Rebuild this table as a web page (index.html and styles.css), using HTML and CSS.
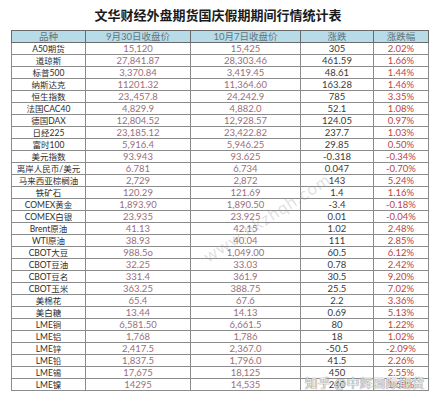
FILE: index.html
```html
<!DOCTYPE html>
<html lang="zh">
<head>
<meta charset="utf-8">
<link rel="stylesheet" href="styles.css">
</head>
<body>
<div class="page">
  <h1 class="title">文华财经外盘期货国庆假期期间行情统计表</h1>
  <div class="wrap">
    <table class="tbl">
      <colgroup>
        <col class="c1"><col class="c2"><col class="c3"><col class="c4"><col class="c5">
      </colgroup>
      <thead>
        <tr><th>品种</th><th>9月30日收盘价</th><th>10月7日收盘价</th><th>涨跌</th><th>涨跌幅</th></tr>
      </thead>
      <tbody>
        <tr><td class="n">A50期货</td><td class="p">15,120</td><td class="p">15,425</td><td>305</td><td class="r">2.02%</td></tr>
        <tr><td class="n">道琼斯</td><td class="p">27,841.87</td><td class="p">28,303.46</td><td>461.59</td><td class="r">1.66%</td></tr>
        <tr><td class="n">标普500</td><td class="p">3,370.84</td><td class="p">3,419.45</td><td>48.61</td><td class="r">1.44%</td></tr>
        <tr><td class="n">纳斯达克</td><td class="p">11201.32</td><td class="p">11,364.60</td><td>163.28</td><td class="r">1.46%</td></tr>
        <tr><td class="n">恒生指数</td><td class="p">23,,457.8</td><td class="p">24,242.9</td><td>785</td><td class="r">3.35%</td></tr>
        <tr><td class="n">法国CAC40</td><td class="p">4,829.9</td><td class="p">4,882.0</td><td>52.1</td><td class="r">1.08%</td></tr>
        <tr><td class="n">德国DAX</td><td class="p">12,804.52</td><td class="p">12,928.57</td><td>124.05</td><td class="r">0.97%</td></tr>
        <tr><td class="n">日经225</td><td class="p">23,185.12</td><td class="p">23,422.82</td><td>237.7</td><td class="r">1.03%</td></tr>
        <tr><td class="n">富时100</td><td class="p">5,916.4</td><td class="p">5,946.25</td><td>29.85</td><td class="r">0.50%</td></tr>
        <tr><td class="n">美元指数</td><td class="p">93.943</td><td class="p">93.625</td><td>-0.318</td><td class="r">-0.34%</td></tr>
        <tr><td class="n">离岸人民币/美元</td><td class="p">6.781</td><td class="p">6.734</td><td>0.047</td><td class="r">-0.70%</td></tr>
        <tr><td class="n">马来西亚棕榈油</td><td class="p">2,729</td><td class="p">2,872</td><td>143</td><td class="r">5.24%</td></tr>
        <tr><td class="n">铁矿石</td><td class="p">120.29</td><td class="p">121.69</td><td>1.4</td><td class="r">1.16%</td></tr>
        <tr><td class="n">COMEX黄金</td><td class="p">1,893.90</td><td class="p">1,890.50</td><td>-3.4</td><td class="r">-0.18%</td></tr>
        <tr><td class="n">COMEX白银</td><td class="p">23.935</td><td class="p">23.925</td><td>0.01</td><td class="r">-0.04%</td></tr>
        <tr><td class="n">Brent原油</td><td class="p">41.13</td><td class="p">42.15</td><td>1.02</td><td class="r">2.48%</td></tr>
        <tr><td class="n">WTI原油</td><td class="p">38.93</td><td class="p">40.04</td><td>111</td><td class="r">2.85%</td></tr>
        <tr><td class="n">CBOT大豆</td><td class="p">988.5o</td><td class="p">1,049.00</td><td>60.5</td><td class="r">6.12%</td></tr>
        <tr><td class="n">CBOT豆油</td><td class="p">32.25</td><td class="p">33.03</td><td>0.78</td><td class="r">2.42%</td></tr>
        <tr><td class="n">CBOT豆名</td><td class="p">331.4</td><td class="p">361.9</td><td>30.5</td><td class="r">9.20%</td></tr>
        <tr><td class="n">CBOT玉米</td><td class="p">363.25</td><td class="p">388.75</td><td>25.5</td><td class="r">7.02%</td></tr>
        <tr><td class="n">美棉花</td><td class="p">65.4</td><td class="p">67.6</td><td>2.2</td><td class="r">3.36%</td></tr>
        <tr><td class="n">美白糖</td><td class="p">13.44</td><td class="p">14.13</td><td>0.69</td><td class="r">5.13%</td></tr>
        <tr><td class="n">LME铜</td><td class="p">6,581.50</td><td class="p">6,661.5</td><td>80</td><td class="r">1.22%</td></tr>
        <tr><td class="n">LME铝</td><td class="p">1,768</td><td class="p">1,786</td><td>18</td><td class="r">1.02%</td></tr>
        <tr><td class="n">LME锌</td><td class="p">2,417.5</td><td class="p">2,367.0</td><td>-50.5</td><td class="r">-2.09%</td></tr>
        <tr><td class="n">LME铅</td><td class="p">1,837.5</td><td class="p">1,796.0</td><td>41.5</td><td class="r">2.26%</td></tr>
        <tr><td class="n">LME锡</td><td class="p">17,675</td><td class="p">18,125</td><td>450</td><td class="r">2.55%</td></tr>
        <tr><td class="n">LME镍</td><td class="p">14295</td><td class="p">14,535</td><td>240</td><td class="r">1.68%</td></tr>
      </tbody>
    </table>
    <div class="wm">www.hkzhqh.com</div>
    <div class="zh">知乎 @中辉国际期货</div>
  </div>
</div>
</body>
</html>
```
FILE: styles.css
```css
html, body {
  margin: 0;
  padding: 0;
  background: #ffffff;
}
.page {
  width: 436px;
  height: 400px;
  font-family: "Lato", "Noto Sans CJK SC", sans-serif;
  overflow: hidden;
}
.title {
  margin: 0;
  padding-top: 6px;
  height: 24px;
  box-sizing: border-box;
  text-align: center;
  font-family: "Noto Sans CJK SC", sans-serif;
  font-size: 13px;
  line-height: 18px;
  font-weight: 700;
  color: #1a1a1a;
}
.wrap {
  position: relative;
  margin: 6px 0 0 11px;
  width: 417px;
}
.tbl {
  border-collapse: collapse;
  table-layout: fixed;
  width: 417px;
  border: 1.5px solid #5a5a5a;
}
.c1 { width: 74px; }
.c2 { width: 105px; }
.c3 { width: 110px; }
.c4 { width: 73px; }
.c5 { width: 55px; }
.tbl th, .tbl td {
  height: 11px;
  padding: 0;
  border: 1px solid #8c8c8c;
  text-align: center;
  font-size: 9.5px;
  line-height: 10px;
  white-space: nowrap;
  overflow: hidden;
}
.tbl th {
  background: #b7dce8;
  font-weight: 400;
  color: #63757e;
  border-color: #6a6a6a;
}
.tbl td {
  color: #3a3a3a;
}
.tbl td.n {
  font-size: 8.5px;
  text-align: center;
  color: #2e2e2e;
}
.tbl td.p {
  color: #9a6f7d;
}
.tbl td.r {
  color: #c0443e;
}
.wm {
  position: absolute;
  left: 194px;
  top: 218px;
  font-size: 17px;
  line-height: 20px;
  white-space: nowrap;
  color: rgba(150, 150, 150, 0.3);
  transform: rotate(-33deg);
  transform-origin: left center;
  letter-spacing: 1px;
  pointer-events: none;
}
.zh {
  position: absolute;
  left: 294px;
  top: 345px;
  white-space: nowrap;
  font-family: "Noto Sans CJK SC", sans-serif;
  font-size: 12.5px;
  line-height: 16px;
  color: rgba(255, 255, 255, 0.85);
  text-shadow: 0 0 1px #777, 0 0 1px #777;
  letter-spacing: 0.5px;
  pointer-events: none;
}
```
